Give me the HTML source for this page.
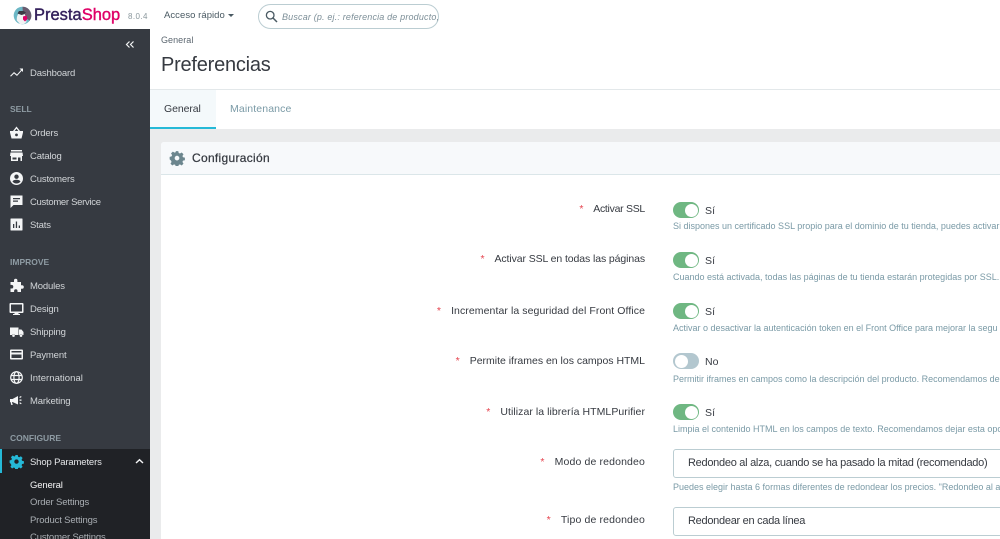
<!DOCTYPE html>
<html lang="es"><head><meta charset="utf-8"><title>Preferencias</title>
<style>
*{box-sizing:border-box}
html,body{margin:0;padding:0;width:1000px;height:539px;overflow:hidden;background:#fff}
body{font-family:"Liberation Sans",sans-serif;color:#363a41;position:relative;filter:blur(.3px)}
.a{position:absolute;white-space:nowrap}
#side{position:absolute;left:0;top:29px;width:150px;height:510px;background:#363a41}
.m{position:absolute;left:30px;font-size:9.5px;line-height:12px;color:#d2d5d8;letter-spacing:-.15px;white-space:nowrap}
.h{position:absolute;left:10px;font-size:8.5px;line-height:12px;font-weight:bold;color:#8e9ba3;letter-spacing:0}
.ic{position:absolute;left:9px;width:15px;height:15px;fill:#f4f5f6}
.lab{position:absolute;right:355px;font-size:10.5px;line-height:14px;color:#363a41;letter-spacing:.08px;white-space:nowrap}
.lab b{color:#e5424d;font-weight:normal;margin-right:10px}
.t{position:absolute;left:673px;width:26px;height:16px;border-radius:8px;background:#6fb782}
.t i{position:absolute;right:1.5px;top:1.5px;width:13px;height:13px;border-radius:50%;background:#fff}
.t.off{background:#b3c7cf}.t.off i{right:auto;left:1.5px}
.v{position:absolute;left:705px;font-size:10.5px;line-height:14px;color:#363a41;letter-spacing:.1px}
.d{position:absolute;left:673px;font-size:9px;line-height:12px;color:#7a9aa6;letter-spacing:0;white-space:nowrap}
.sel{position:absolute;left:673px;width:340px;height:29px;border:1px solid #bbcdd2;border-radius:3px;background:#fff;font-size:11px;line-height:27px;padding-left:14px;letter-spacing:-.28px;color:#363a41;white-space:nowrap}
</style></head><body>

<!-- Header -->
<svg class="a" style="left:13px;top:6px" width="19" height="19" viewBox="0 0 19 19"><circle cx="9.500" cy="9.500" r="8.800" fill="#6db8c6"/><path d="M9.500.7a8.800 8.800 0 0 1 7 14.100L10 9z" fill="#6a5a6e"/><path d="M3.800 14.500C3.500 10 5 6.500 8.500 6.500c2.500 0 4 2.500 4.500 5.500l.5 4-2.500 2H7z" fill="#f1f2f3"/><path d="M4.500 7.500L6 5h4.500L13 6.500 10.500 8.500 8.500 9z" fill="#3a3a44"/><path d="M10 10.500l3.500-1 1 3.500-2.500 2.500-2-2z" fill="#df0067"/></svg>
<div class="a" style="left:34px;top:4px;font-size:16.5px;line-height:22px;letter-spacing:0;color:#34215c;-webkit-text-stroke:.4px #34215c">Presta<span style="color:#df0067;-webkit-text-stroke:.4px #df0067">Shop</span></div>
<div class="a" style="left:128px;top:11px;font-size:8px;line-height:11px;color:#8a979d;letter-spacing:.4px">8.0.4</div>
<div class="a" style="left:164px;top:10px;font-size:9.5px;line-height:12px;color:#4a5a63;letter-spacing:.05px">Acceso rápido</div>
<div class="a" style="left:228px;top:14px;width:0;height:0;border-left:3.5px solid transparent;border-right:3.5px solid transparent;border-top:3.5px solid #4a5a63"></div>
<div class="a" style="left:258px;top:4px;width:181px;height:25px;border:1px solid #bbcdd2;border-radius:13px;background:#fff"></div>
<svg class="a" style="left:265px;top:10px" width="13" height="13" viewBox="0 0 13 13"><circle cx="5.200" cy="5.200" r="3.800" fill="none" stroke="#4a5a63" stroke-width="1.300"/><path d="M8 8l4 4" stroke="#4a5a63" stroke-width="1.500"/></svg>
<div class="a" style="left:282px;top:11px;font-size:9px;line-height:12px;font-style:italic;color:#7d8f98;letter-spacing:.17px">Buscar (p. ej.: referencia de producto,</div>

<!-- Sidebar -->
<div id="side"></div>
<div class="a" style="left:0;top:449px;width:150px;height:90px;background:#202226"></div>
<div class="a" style="left:0;top:449px;width:2px;height:24px;background:#25b9d7"></div>
<svg class="a" style="left:125px;top:40px" width="10" height="10" viewBox="0 0 10 10"><path d="M4.500 1.500L1.500 4.500l3 3M8.500 1.500L5.500 4.500l3 3" fill="none" stroke="#f4f5f6" stroke-width="1.200"/></svg>

<svg class="ic" style="top:65px" viewBox="0 0 15 15"><path d="M1 11l4-4 3 2.500L12 5l-1.500-1.500H14V7l-1.300-1.300L8 11 5 8.500 2 11.500z"/></svg>
<div class="m" style="top:68px">Dashboard</div>

<div class="h" style="top:103px">SELL</div>
<svg class="ic" style="top:125px" viewBox="0 0 15 15"><path d="M7.500 1.500L4 6H1v1.500l1.500 6h10l1.500-6V6h-3zM5.700 6l1.800-2.400L9.300 6zM7.500 8.500a1.400 1.400 0 1 1 0 2.800 1.400 1.400 0 0 1 0-2.800z" fill-rule="evenodd"/></svg>
<div class="m" style="top:128px">Orders</div>
<svg class="ic" style="top:148px" viewBox="0 0 15 15"><path d="M2 2h11v1.500H2zM1.500 4.500h12l.5 3.500h-1v5h-1.500V9.500H9V13H2V8H1zM3.500 9.500V11.500h4V9.500z" fill-rule="evenodd"/></svg>
<div class="m" style="top:151px">Catalog</div>
<svg class="ic" style="top:171px" viewBox="0 0 15 15"><path d="M7.500 1a6.500 6.500 0 1 0 0 13 6.500 6.500 0 0 0 0-13zm0 2.500a2.200 2.200 0 1 1 0 4.400 2.200 2.200 0 0 1 0-4.400zm0 9a5 5 0 0 1-4-2c.5-1.300 2.500-1.800 4-1.800s3.500.5 4 1.800a5 5 0 0 1-4 2z" fill-rule="evenodd"/></svg>
<div class="m" style="top:174px">Customers</div>
<svg class="ic" style="top:194px" viewBox="0 0 15 15"><path d="M1.500 1.500h12v9.500H4.500l-3 3zM4 4v1.300h7V4zm0 2.500v1.300h5V6.500z" fill-rule="evenodd"/></svg>
<div class="m" style="top:197px;letter-spacing:-.3px">Customer Service</div>
<svg class="ic" style="top:217px" viewBox="0 0 15 15"><path d="M2 1.500h11a.5.5 0 0 1 .5.5v11a.5.5 0 0 1-.5.5H2a.5.5 0 0 1-.5-.5V2a.5.5 0 0 1 .5-.5zM4 7v4h1.300V7zm2.800-2.500V11h1.300V4.500zM9.700 8.500V11H11V8.500z" fill-rule="evenodd"/></svg>
<div class="m" style="top:220px">Stats</div>

<div class="h" style="top:256px">IMPROVE</div>
<svg class="ic" style="top:278px" viewBox="0 0 15 15"><path d="M5 2.500a1.700 1.700 0 0 1 3.400 0V4H12v3.200h1a1.800 1.800 0 0 1 0 3.600h-1V14H8.500v-1a1.700 1.700 0 0 0-3.400 0v1H1.500v-3.500h1a1.800 1.800 0 0 0 0-3.600h-1V4H5z"/></svg>
<div class="m" style="top:281px">Modules</div>
<svg class="ic" style="top:301px" viewBox="0 0 15 15"><path d="M1.500 2h12a1 1 0 0 1 1 1v8a1 1 0 0 1-1 1H9.500v1H11v1H4v-1h1.500v-1h-4a1 1 0 0 1-1-1V3a1 1 0 0 1 1-1zm.5 1.500v7h11v-7z" fill-rule="evenodd"/></svg>
<div class="m" style="top:304px">Design</div>
<svg class="ic" style="top:324px" viewBox="0 0 15 15"><path d="M1 3.500h8.500V11H6a1.600 1.600 0 0 0-3 0H1zM10 5.500h2.500L14.500 8v3h-1a1.600 1.600 0 0 0-3 0H10zM4.500 10.300a1.300 1.300 0 1 1 0 2.600 1.300 1.300 0 0 1 0-2.600zM12 10.300a1.300 1.300 0 1 1 0 2.600 1.300 1.300 0 0 1 0-2.600z"/></svg>
<div class="m" style="top:327px">Shipping</div>
<svg class="ic" style="top:347px" viewBox="0 0 15 15"><path d="M2 2.500h11a1 1 0 0 1 1 1v8a1 1 0 0 1-1 1H2a1 1 0 0 1-1-1v-8a1 1 0 0 1 1-1zM2.500 4v1.500h10V4zm0 3.500V11h10V7.500z" fill-rule="evenodd"/></svg>
<div class="m" style="top:350px">Payment</div>
<svg class="ic" style="top:370px;fill:none;stroke:#f4f5f6;stroke-width:1.200" viewBox="0 0 15 15"><circle cx="7.500" cy="7.500" r="5.800"/><ellipse cx="7.500" cy="7.500" rx="2.600" ry="5.800"/><path d="M2 5.500h11M2 9.500h11"/></svg>
<div class="m" style="top:373px;letter-spacing:.05px">International</div>
<svg class="ic" style="top:393px" viewBox="0 0 15 15"><path d="M1 6h2.500L9 3v8.500L3.500 9H3l.7 3H2.300L1.500 9H1zM10.500 6.500h2v1.300h-2zM10.300 4l1.700-1 .6 1-1.700 1zM10.300 10.300l.6-1 1.700 1-.6 1z"/></svg>
<div class="m" style="top:396px">Marketing</div>

<div class="h" style="top:432px">CONFIGURE</div>
<svg class="ic" style="top:454px;fill:#25b9d7" viewBox="0 0 15 15"><path d="M6.300 1h2.400l.4 1.800 1.200.5 1.600-1 1.700 1.700-1 1.600.5 1.200 1.800.4v2.400l-1.800.4-.5 1.200 1 1.600-1.700 1.700-1.600-1-1.200.5-.4 1.800H6.300l-.4-1.800-1.200-.5-1.600 1-1.700-1.700 1-1.600-.5-1.200L.6 8.800V6.400l1.800-.4.5-1.200-1-1.600 1.700-1.700 1.600 1 1.200-.5zM7.500 5.400a2.200 2.200 0 1 0 0 4.400 2.200 2.200 0 0 0 0-4.400z" fill-rule="evenodd"/></svg>
<div class="m" style="top:457px;color:#e4e6e8">Shop Parameters</div>
<svg class="a" style="left:135px;top:458px" width="9" height="7" viewBox="0 0 9 7"><path d="M1 5l3.500-3.300L8 5" fill="none" stroke="#f4f5f6" stroke-width="1.400"/></svg>
<div class="m" style="top:480px;color:#f4f5f6">General</div>
<div class="m" style="top:497px;color:#a9aeb3">Order Settings</div>
<div class="m" style="top:515px;color:#a9aeb3">Product Settings</div>
<div class="m" style="top:532px;color:#a9aeb3">Customer Settings</div>

<!-- Page head -->
<div class="a" style="left:161px;top:34px;font-size:9px;line-height:12px;color:#5c6770;letter-spacing:.05px">General</div>
<div class="a" style="left:161px;top:53px;font-size:20px;line-height:25px;color:#363a41;letter-spacing:-.23px">Preferencias</div>
<div class="a" style="left:150px;top:89px;width:850px;height:1px;background:#e3e8ea"></div>

<!-- Tabs -->
<div class="a" style="left:150px;top:90px;width:66px;height:39px;background:#f4f9fb;border-bottom:2px solid #25b9d7"></div>
<div class="a" style="left:164px;top:102px;font-size:10.5px;line-height:14px;color:#363a41;letter-spacing:-.08px">General</div>
<div class="a" style="left:230px;top:102px;font-size:10.5px;line-height:14px;color:#7a9aa6;letter-spacing:.12px">Maintenance</div>

<!-- Content bg -->
<div class="a" style="left:150px;top:129px;width:850px;height:410px;background:#eaebec"></div>
<div class="a" style="left:161px;top:142px;width:850px;height:410px;background:#fff;border-radius:3px 0 0 0"></div>
<div class="a" style="left:161px;top:142px;width:839px;height:33px;background:#f7f9fb;border-bottom:1px solid #dbe6e9;border-radius:3px 0 0 0"></div>
<svg class="a" style="left:169px;top:150px" width="16" height="16" viewBox="0 0 15 15"><path fill="#6c868e" d="M6.300 1h2.400l.4 1.800 1.200.5 1.600-1 1.700 1.700-1 1.600.5 1.200 1.800.4v2.400l-1.800.4-.5 1.200 1 1.600-1.700 1.700-1.600-1-1.200.5-.4 1.800H6.300l-.4-1.800-1.200-.5-1.600 1-1.700-1.700 1-1.600-.5-1.200L.6 8.800V6.400l1.800-.4.5-1.200-1-1.600 1.700-1.700 1.600 1 1.200-.5zM7.500 5.400a2.200 2.200 0 1 0 0 4.400 2.200 2.200 0 0 0 0-4.400z" fill-rule="evenodd"/></svg>
<div class="a" style="left:192px;top:151px;font-size:12px;line-height:15px;color:#363a41;letter-spacing:.3px;-webkit-text-stroke:.25px #363a41">Configuración</div>

<!-- Form -->
<div class="lab" style="top:202px;letter-spacing:-.28px"><b>*</b>Activar SSL</div>
<div class="t" style="top:202px"><i></i></div><div class="v" style="top:204px">Sí</div>
<div class="d" style="top:220px">Si dispones un certificado SSL propio para el dominio de tu tienda, puedes activar</div>

<div class="lab" style="top:252px;letter-spacing:-.1px"><b>*</b>Activar SSL en todas las páginas</div>
<div class="t" style="top:252px"><i></i></div><div class="v" style="top:254px">Sí</div>
<div class="d" style="top:271px">Cuando está activada, todas las páginas de tu tienda estarán protegidas por SSL.</div>

<div class="lab" style="top:304px"><b>*</b>Incrementar la seguridad del Front Office</div>
<div class="t" style="top:303px"><i></i></div><div class="v" style="top:305px">Sí</div>
<div class="d" style="top:322px">Activar o desactivar la autenticación token en el Front Office para mejorar la segu</div>

<div class="lab" style="top:354px;letter-spacing:-.01px"><b>*</b>Permite iframes en los campos HTML</div>
<div class="t off" style="top:353px"><i></i></div><div class="v" style="top:355px">No</div>
<div class="d" style="top:373px">Permitir iframes en campos como la descripción del producto. Recomendamos de</div>

<div class="lab" style="top:405px;letter-spacing:.05px"><b>*</b>Utilizar la librería HTMLPurifier</div>
<div class="t" style="top:404px"><i></i></div><div class="v" style="top:406px">Sí</div>
<div class="d" style="top:423px">Limpia el contenido HTML en los campos de texto. Recomendamos dejar esta opc</div>

<div class="lab" style="top:455px;letter-spacing:.14px"><b>*</b>Modo de redondeo</div>
<div class="sel" style="top:449px">Redondeo al alza, cuando se ha pasado la mitad (recomendado)</div>
<div class="d" style="top:481px">Puedes elegir hasta 6 formas diferentes de redondear los precios. "Redondeo al a</div>

<div class="lab" style="top:513px;letter-spacing:.14px"><b>*</b>Tipo de redondeo</div>
<div class="sel" style="top:507px">Redondear en cada línea</div>

</body></html>
